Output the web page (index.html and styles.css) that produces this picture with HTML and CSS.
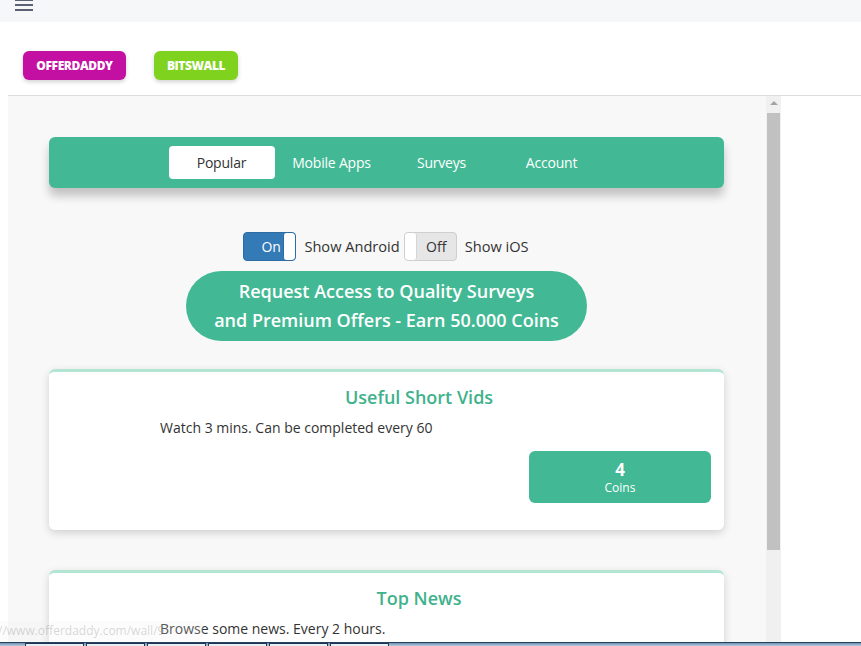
FILE: index.html
```html
<!DOCTYPE html>
<html lang="en">
<head>
<meta charset="utf-8">
<title>OfferDaddy Wall</title>
<link rel="stylesheet" href="styles.css">
</head>
<body>
<div class="page">
  <header class="topbar">
    <button class="menu-btn" aria-label="Menu">
      <svg width="18" height="12" viewBox="0 0 18 12"><rect x="0" y="0" width="18" height="2" fill="#5b6072"/><rect x="0" y="5" width="18" height="2" fill="#5b6072"/><rect x="0" y="10" width="18" height="2" fill="#5b6072"/></svg>
    </button>
  </header>

  <div class="partners">
    <a class="partner partner-od">OFFERDADDY</a>
    <a class="partner partner-bw">BITSWALL</a>
  </div>

  <div class="frame-row">
    <div class="frame">
      <nav class="nav">
        <a class="tab active">Popular</a>
        <a class="tab">Mobile Apps</a>
        <a class="tab">Surveys</a>
        <a class="tab">Account</a>
      </nav>

      <div class="toggles">
        <div class="toggle toggle-on"><span class="toggle-label">On</span><span class="toggle-handle"></span></div>
        <span class="toggle-text toggle-text-a">Show Android</span>
        <div class="toggle toggle-off"><span class="toggle-handle"></span><span class="toggle-label">Off</span></div>
        <span class="toggle-text">Show iOS</span>
      </div>

      <div class="pill">Request Access to Quality Surveys<br>and Premium Offers - Earn 50.000 Coins</div>

      <section class="card">
        <div class="card-info">
          <h3 class="card-title">Useful Short Vids</h3>
          <p class="card-desc">Watch 3 mins. Can be completed every 60</p>
        </div>
        <div class="card-actions">
          <div class="coins"><span class="coins-num">4</span><span class="coins-label">Coins</span></div>
        </div>
      </section>

      <section class="card">
        <div class="card-info">
          <h3 class="card-title">Top News</h3>
          <p class="card-desc">Browse some news. Every 2 hours.</p>
        </div>
      </section>
    </div>
    <div class="scrollbar">
      <div class="scroll-arrow"></div>
      <div class="scroll-thumb"></div>
    </div>
    <div class="side"></div>
  </div>

  <div class="taskbar">
    <span class="task"></span><span class="task"></span><span class="task"></span><span class="task"></span><span class="task"></span><span class="task"></span>
  </div>

  <div class="status">//www.offerdaddy.com/wall/9</div>
</div>
</body>
</html>
```

FILE: styles.css
```css
* { box-sizing: border-box; }
html, body { margin: 0; padding: 0; }
body {
  font-family: "Open Sans", "Noto Sans", Arial, sans-serif;
  color: #333;
  background: #fff;
  overflow: hidden;
}
.page {
  height: 646px;
  display: flex;
  flex-direction: column;
  overflow: hidden;
  position: relative;
}
.topbar {
  height: 22px;
  background: #f6f7f9;
  flex: none;
  display: flex;
  align-items: flex-start;
}
.menu-btn {
  border: 0;
  background: transparent;
  padding: 0;
  margin: 0 0 0 15px;
  height: 12px;
  line-height: 0;
  transform: translateY(-1px);
}
.partners {
  flex: none;
  display: flex;
  gap: 28px;
  padding: 29px 0 15px 23px;
}
.partner {
  display: flex;
  align-items: center;
  justify-content: center;
  height: 29px;
  border-radius: 6px;
  color: #fff;
  font-weight: 800;
  font-size: 12px;
  letter-spacing: -0.4px;
  box-shadow: 0 2px 4px rgba(0,0,0,0.18);
}
.partner-od { width: 103px; background: #c40fa3; }
.partner-bw { width: 84px; background: #7fd31f; }

.frame-row {
  flex: 1;
  min-height: 0;
  display: flex;
  margin-left: 8px;
  border-top: 1px solid #dcdcdc;
  overflow: hidden;
}
.frame {
  width: 758px;
  flex: none;
  background: #f8f8f8;
  padding: 41px 42px 0 41px;
  overflow: hidden;
}
.nav {
  height: 51px;
  background: #42b994;
  border-radius: 6px;
  box-shadow: 0 8px 10px rgba(0,0,0,0.22);
  display: flex;
  justify-content: center;
  align-items: center;
  gap: 4px;
}
.tab {
  width: 106px;
  height: 33px;
  display: flex;
  align-items: center;
  justify-content: center;
  color: #fff;
  font-size: 14px;
  letter-spacing: -0.2px;
  border-radius: 4px;
}
.tab.active { background: #fff; color: #333; }

.toggles {
  margin-top: 44px;
  display: flex;
  justify-content: center;
  align-items: center;
  height: 29px;
  padding-left: 7px;
}
.toggle {
  width: 53px;
  height: 29px;
  border-radius: 4px;
  display: flex;
  overflow: hidden;
  font-size: 14px;
  flex: none;
}
.toggle-on { background: #337ab7; border: 1px solid #2e6da4; color: #fff; }
.toggle-off { background: #e6e6e6; border: 1px solid #cfcfcf; color: #333; }
.toggle-label {
  flex: 1;
  display: flex;
  align-items: center;
  justify-content: center;
}
.toggle-on .toggle-label { padding-left: 17px; justify-content: flex-start; }
.toggle-handle {
  width: 12px;
  background: #fff;
  border-radius: 3px;
  flex: none;
}
.toggle-on .toggle-handle { border-left: 1px solid #2e6da4; }
.toggle-off .toggle-handle { border-right: 1px solid #d6d6d6; }
.toggle-text { font-size: 14.6px; color: #333; margin: 0 8px; transform: translateY(-1px); }
.toggle-text-a { margin-right: 4px; }

.pill {
  margin: 10px auto 0;
  width: 401px;
  height: 70px;
  border-radius: 35px;
  background: #42b994;
  color: #fff;
  font-weight: 600;
  font-size: 18px;
  line-height: 29px;
  padding-top: 6px;
  text-align: center;
}

.card {
  margin-top: 28px;
  background: #fff;
  border-top: 3px solid #b3e5d3;
  border-radius: 6px;
  box-shadow: 0 3px 8px rgba(0,0,0,0.16);
  padding: 13px 13px 27px;
}
.card + .card { margin-top: 40px; }
.card-info { margin: 0 33px 0 98px; }
.card-title {
  margin: 0;
  text-align: center;
  font-size: 18px;
  font-weight: 600;
  line-height: 25px;
  color: #3fb28c;
}
.card-desc {
  margin: 8px 0 0;
  font-size: 14px;
  line-height: 20px;
  color: #333;
}
.card-actions {
  display: flex;
  justify-content: flex-end;
  margin-top: 13px;
}
.coins {
  width: 182px;
  height: 52px;
  border-radius: 6px;
  background: #42b994;
  color: #fff;
  display: flex;
  flex-direction: column;
  align-items: center;
  justify-content: center;
}
.coins-num { display: block; font-size: 17px; font-weight: 700; line-height: 20px; }
.coins-label { display: block; font-size: 12px; line-height: 15px; }

.scrollbar {
  width: 15px;
  flex: none;
  background: #f0f0f0;
  display: flex;
  flex-direction: column;
  align-items: center;
}
.scroll-arrow {
  margin-top: 5px;
  width: 0;
  height: 0;
  border-left: 4px solid transparent;
  border-right: 4px solid transparent;
  border-bottom: 4px solid #a3a3a3;
}
.scroll-thumb {
  margin-top: 8px;
  width: 13px;
  height: 437px;
  background: #c1c1c1;
}
.side { flex: 1; background: #fff; }
.status {
  position: absolute;
  left: -2px;
  bottom: 5px;
  width: 205px;
  height: 20px;
  line-height: 20px;
  font-size: 12px;
  color: rgba(120,120,120,0.3);
  background: rgba(240,240,240,0.2);
  pointer-events: none;
}
.taskbar {
  flex: none;
  height: 4px;
  border-top: 1px solid #24405e;
  background: linear-gradient(#6f8fb0, #b7cbe0);
  display: flex;
  gap: 2px;
  padding-left: 25px;
}
.task {
  width: 59px;
  height: 3px;
  border: 1px solid #1f3650;
  border-bottom: 0;
  background: #e8eef5;
}
```
